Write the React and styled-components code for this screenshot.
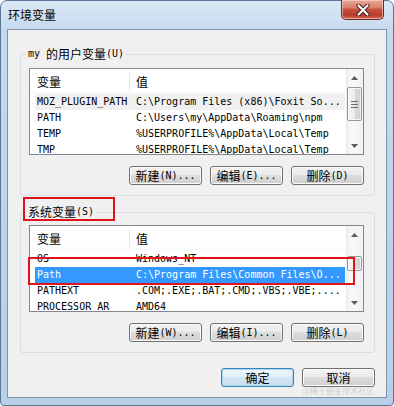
import React from 'react';
import styled, { createGlobalStyle } from 'styled-components';

const GlobalStyle = createGlobalStyle`
  html, body { margin: 0; padding: 0; background: #ffffff; }
  body {
    font-family: "Noto Sans CJK SC", "Noto Sans", sans-serif;
    font-size: 12px;
    color: #000;
  }
  *, *::before, *::after { box-sizing: border-box; }
`;

const Window = styled.div`
  position: relative;
  width: 394px;
  height: 406px;
  padding: 0 6px 7px 6px;
  border: 1px solid #5a7697;
  border-radius: 7px 7px 4px 4px;
  background: linear-gradient(180deg, #dbe8f6 0px, #c6daef 28px, #bed3ea 60%, #b9cfe7 100%);
  display: flex;
  flex-direction: column;
`;

const TitleBar = styled.div`
  height: 28px;
  display: flex;
  align-items: flex-start;
  justify-content: space-between;
`;

const Title = styled.div`
  padding: 7px 0 0 1px;
  line-height: 14px;
  font-size: 12px;
  color: #000;
`;

const CloseBtn = styled.div`
  width: 43px;
  height: 20px;
  margin: -1px 3px 0 0;
  border: 1px solid #6b2d27;
  border-top: none;
  border-radius: 0 0 5px 5px;
  background: linear-gradient(180deg, #e9a998 0%, #d9806c 40%, #c7503d 50%, #b83a2c 80%, #d2705c 100%);
  box-shadow: inset 0 0 0 1px rgba(255, 220, 210, 0.55);
  display: flex;
  align-items: center;
  justify-content: center;
`;

const Client = styled.div`
  flex: 1;
  background: #f0f0f0;
  border: 1px solid #7c93ad;
  display: flex;
  flex-direction: column;
`;

const Group = styled.fieldset`
  margin: ${p => p.$top}px 11px 0 12px;
  padding: ${p => p.$padTop}px 10px 10px 8px;
  border: 1px solid #d5dfe5;
  border-radius: 3px;
  min-width: 0;
  display: flex;
  flex-direction: column;
`;

const Legend = styled.legend`
  margin-left: -3px;
  padding: 0 2px;
  line-height: 14px;
  height: 14px;
  font-size: 12px;
  display: flex;
  align-items: center;
  white-space: nowrap;
`;

const Mono = styled.span`
  font-family: "DejaVu Sans Mono", "Liberation Mono", monospace;
  font-size: 10px;
`;

const ListView = styled.div`
  height: 87px;
  border: 1px solid #828790;
  background: #ffffff;
  display: flex;
  overflow: hidden;
`;

const ListBody = styled.div`
  flex: 1;
  min-width: 0;
  display: flex;
  flex-direction: column;
`;

const Header = styled.div`
  height: 25px;
  flex: none;
  display: grid;
  grid-template-columns: 99px 1px 1fr;
  align-items: center;
  background: linear-gradient(180deg, #ffffff 0%, #ffffff 80%, #f7f8fa 100%);
`;

const HeaderCell = styled.div`
  padding-left: ${p => p.$pad}px;
  line-height: 25px;
  font-size: 12px;
`;

const HeaderDivider = styled.div`
  width: 1px;
  height: 17px;
  background: #e3e5e8;
`;

const Row = styled.div`
  height: 16px;
  flex: none;
  margin: 0 1px 0 5px;
  padding-left: 2px;
  display: grid;
  grid-template-columns: 99px 1fr;
  background: ${p => (p.$state === 'selected' ? '#3399ff' : p.$state === 'inactive' ? '#f0f0f0' : 'transparent')};
  color: ${p => (p.$state === 'selected' ? '#ffffff' : '#000000')};
  font-family: "DejaVu Sans Mono", "Liberation Mono", monospace;
  font-size: 10px;
  line-height: 16px;
`;

const Cell = styled.div`
  white-space: pre;
  overflow: hidden;
`;

const ScrollBar = styled.div`
  width: 17px;
  flex: none;
  display: flex;
  flex-direction: column;
  background: linear-gradient(90deg, #e6e6e6 0px, #f4f4f4 2px, #f7f7f7 50%, #f1f1f1 100%);
`;

const ArrowBtn = styled.div`
  height: 17px;
  flex: none;
  display: flex;
  align-items: center;
  justify-content: center;
`;

const Track = styled.div`
  flex: 1;
  display: flex;
  flex-direction: column;
  padding-top: ${p => p.$offset}px;
`;

const Thumb = styled.div`
  height: ${p => p.$h}px;
  margin: 0 1px 0 1px;
  border: 1px solid #979797;
  border-radius: 2px;
  background: linear-gradient(90deg, #f5f5f5 0%, #ebebeb 50%, #d9d9d9 55%, #d3d3d3 100%);
  box-shadow: inset 0 0 0 1px rgba(255, 255, 255, 0.7);
  display: flex;
  align-items: center;
  justify-content: center;
`;

const ButtonRow = styled.div`
  margin-top: 11px;
  display: flex;
  justify-content: flex-end;
  gap: 8px;
`;

const Button = styled.button`
  width: 73px;
  height: 19px;
  padding: 0;
  margin: 0;
  border: 1px solid ${p => (p.$default ? '#3c7fb1' : '#707070')};
  border-radius: 3px;
  background: ${p =>
    p.$default
      ? 'linear-gradient(180deg, #eef6fc 0%, #e3eff8 45%, #d2e5f3 50%, #c8def0 100%)'
      : 'linear-gradient(180deg, #f2f2f2 0%, #ebebeb 45%, #dddddd 50%, #cfcfcf 100%)'};
  box-shadow: inset 0 0 0 1px ${p => (p.$default ? '#a8d8f7' : '#fbfbfb')};
  font-family: "Noto Sans CJK SC", sans-serif;
  font-size: 12px;
  line-height: 17px;
  color: #000;
  display: flex;
  align-items: center;
  justify-content: center;
  white-space: nowrap;
`;

const Footer = styled.div`
  margin: 15px 11px 0 0;
  display: flex;
  justify-content: flex-end;
  gap: 8px;
`;

const Mark = styled.div`
  position: absolute;
  left: ${p => p.$x}px;
  top: ${p => p.$y}px;
  width: ${p => p.$w}px;
  height: ${p => p.$h}px;
  border: 2px solid #e0121c;
  pointer-events: none;
`;

const Watermark = styled.div`
  position: absolute;
  right: 19px;
  bottom: 9px;
  font-size: 8px;
  line-height: 10px;
  color: #c9c9c9;
  text-shadow: 0 0 1px #ffffff;
  white-space: nowrap;
`;

const UpArrow = () => (
  <svg width="7" height="4" viewBox="0 0 7 4"><path d="M3.5 0 L7 4 L0 4 Z" fill="#5a5a5a" /></svg>
);
const DownArrow = () => (
  <svg width="7" height="4" viewBox="0 0 7 4"><path d="M0 0 L7 0 L3.5 4 Z" fill="#5a5a5a" /></svg>
);
const Grip = () => (
  <svg width="7" height="7" viewBox="0 0 7 7">
    <path d="M0 0.5 H7 M0 3.5 H7 M0 6.5 H7" stroke="#6b6b6b" strokeWidth="1" />
  </svg>
);
const CloseX = () => (
  <svg width="14" height="12" viewBox="0 0 14 12">
    <path d="M2.5 1.5 L11.5 10.5 M11.5 1.5 L2.5 10.5" stroke="#4a1d18" strokeWidth="4.2" strokeLinecap="round" />
    <path d="M2.5 1.5 L11.5 10.5 M11.5 1.5 L2.5 10.5" stroke="#ffffff" strokeWidth="2.2" strokeLinecap="round" />
  </svg>
);

const List = ({ rows, thumbTop, thumbH, grip }) => (
  <ListView>
    <ListBody>
      <Header>
        <HeaderCell $pad={7}>变量</HeaderCell>
        <HeaderDivider />
        <HeaderCell $pad={6}>值</HeaderCell>
      </Header>
      {rows.map(([name, value, state]) => (
        <Row key={name} $state={state}>
          <Cell>{name}</Cell>
          <Cell>{value}</Cell>
        </Row>
      ))}
    </ListBody>
    <ScrollBar>
      <ArrowBtn><UpArrow /></ArrowBtn>
      <Track $offset={thumbTop}>
        <Thumb $h={thumbH}>{grip && <Grip />}</Thumb>
      </Track>
      <ArrowBtn><DownArrow /></ArrowBtn>
    </ScrollBar>
  </ListView>
);

const userVars = [
  ['MOZ_PLUGIN_PATH', 'C:\\Program Files (x86)\\Foxit So...', 'inactive'],
  ['PATH', 'C:\\Users\\my\\AppData\\Roaming\\npm'],
  ['TEMP', '%USERPROFILE%\\AppData\\Local\\Temp'],
  ['TMP', '%USERPROFILE%\\AppData\\Local\\Temp'],
];

const sysVars = [
  ['OS', 'Windows_NT'],
  ['Path', 'C:\\Program Files\\Common Files\\O...', 'selected'],
  ['PATHEXT', '.COM;.EXE;.BAT;.CMD;.VBS;.VBE;....'],
  ['PROCESSOR_AR', 'AMD64'],
];

export default function App() {
  return (
    <>
      <GlobalStyle />
      <Window>
        <TitleBar>
          <Title>环境变量</Title>
          <CloseBtn><CloseX /></CloseBtn>
        </TitleBar>
        <Client>
          <Group $top={17} $padTop={7}>
            <Legend><Mono>my&nbsp;</Mono>的用户变量<Mono>(U)</Mono></Legend>
            <List rows={userVars} thumbTop={1} thumbH={34} grip />
            <ButtonRow>
              <Button>新建<Mono>(N)...</Mono></Button>
              <Button>编辑<Mono>(E)...</Mono></Button>
              <Button>删除<Mono>(D)</Mono></Button>
            </ButtonRow>
          </Group>
          <Group $top={9} $padTop={6}>
            <Legend>系统变量<Mono>(S)</Mono></Legend>
            <List rows={sysVars} thumbTop={13} thumbH={15} />
            <ButtonRow>
              <Button>新建<Mono>(W)...</Mono></Button>
              <Button>编辑<Mono>(I)...</Mono></Button>
              <Button>删除<Mono>(L)</Mono></Button>
            </ButtonRow>
          </Group>
          <Footer>
            <Button $default>确定</Button>
            <Button>取消</Button>
          </Footer>
        </Client>
        <Mark $x={22} $y={196} $w={92} $h={24} />
        <Mark $x={27} $y={256} $w={327} $h={28} />
        <Watermark>@稀土掘金技术社区</Watermark>
      </Window>
    </>
  );
}
